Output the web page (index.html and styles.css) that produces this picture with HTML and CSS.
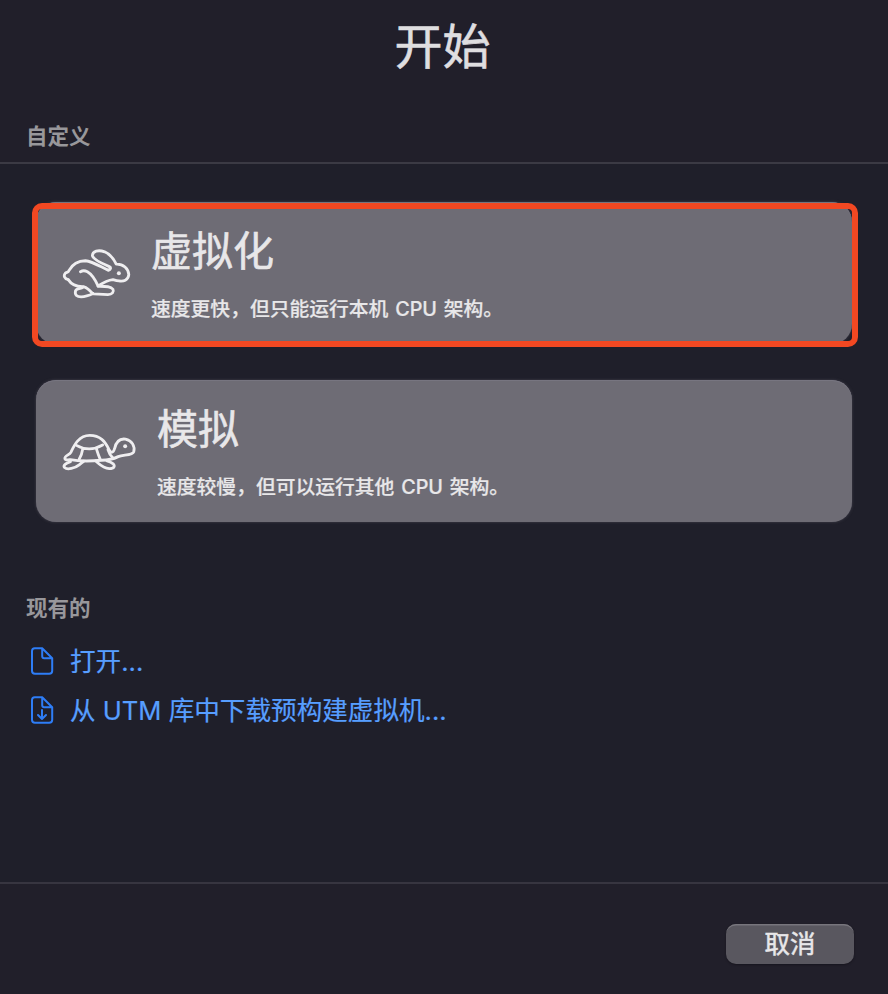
FILE: index.html
```html
<!DOCTYPE html>
<html lang="zh-CN">
<head>
<meta charset="utf-8">
<title>开始</title>
<link rel="stylesheet" href="styles.css">
</head>
<body>
<main class="wizard">
  <header class="header">
    <h1 class="title">开始</h1>
    <h2 class="section-label">自定义</h2>
  </header>
  <section class="content">
    <button class="card card-selected">
      <svg class="rabbit" viewBox="-1 0 302 240" aria-hidden="true">
        <path d="M54 134C43 132 39 122 45 115C49 111 54 113 56 107C67 87 85 77 106 77C126 79 150 94 176 106C182 103 184 98 179 95C160 87 130 75 127 62C127 48 145 43 164 50C180 57 192 72 199 87C220 86 236 101 237 119C235 137 221 140 207 138C199 137 193 135 189 134C179 135 158 144 144 153C137 137 128 119 112 110C104 106 96 107 91 110"/>
        <path d="M54 134C63 148 76 155 97 155C112 155 117 168 130 177L174 179C187 179 193 171 189 163C182 153 166 154 144 154"/>
        <path d="M100 156C91 164 80 158 76 168C73 181 81 186 93 186C108 186 119 181 129 176"/>
        <circle class="eye" cx="207" cy="115" r="6"/>
      </svg>
      <span class="card-text">
        <span class="card-title">虚拟化</span>
        <span class="card-note">速度更快，但只能运行本机 CPU 架构。</span>
      </span>
    </button>
    <button class="card">
      <svg class="turtle" viewBox="-1 0 302 210" aria-hidden="true">
        <path d="M44 131C42 122 57 121 62 112C72 91 86 61 119 61C151 61 165 79 177 103C184 116 190 114 194 101C199 77 212 70 227 72C247 76 256 94 252 110C248 121 221 119 205 125C191 132 181 136 155 136C121 139 85 139 60 134C51 135 45 136 44 131Z"/>
        <path d="M79 91Q118 113 158 90M98 101Q95 120 87 133M139 101Q145 121 151 134M174 104Q178 119 190 130"/>
        <path d="M61 140C45 145 38 152 43 158C51 166 75 160 87 150Q95 143 101 139M137 138C151 150 159 160 178 161C193 161 196 154 190 147Q181 140 171 138"/>
        <circle class="eye" cx="226" cy="94" r="6"/>
      </svg>
      <span class="card-text">
        <span class="card-title">模拟</span>
        <span class="card-note">速度较慢，但可以运行其他 CPU 架构。</span>
      </span>
    </button>
    <h2 class="section-label existing">现有的</h2>
    <nav class="links">
      <a class="link">
        <svg class="file" viewBox="0 0 24 28" aria-hidden="true"><path d="M4.8 1.2H12.2L22.2 11.2V23.8Q22.2 26.8 19.2 26.8H5Q2 26.8 2 23.8V4Q2 1.2 4.8 1.2M12.2 1.2V9.2Q12.2 11.2 14.2 11.2H22.2"/></svg>
        <span>打开...</span>
      </a>
      <a class="link">
        <svg class="file" viewBox="0 0 24 28" aria-hidden="true"><path d="M4.8 1.2H12.2L22.2 11.2V23.8Q22.2 26.8 19.2 26.8H5Q2 26.8 2 23.8V4Q2 1.2 4.8 1.2M12.2 1.2V9.2Q12.2 11.2 14.2 11.2H22.2"/><path d="M12 14V22.7M8 19L12 23L16 19"/></svg>
        <span>从 UTM 库中下载预构建虚拟机...</span>
      </a>
    </nav>
  </section>
  <footer class="footer"><button class="cancel">取消</button></footer>
</main>
</body>
</html>
```

FILE: styles.css
```css
* { box-sizing: border-box; }
body { margin: 0; background: #1f1e29; }
button { font: inherit; color: inherit; border: 0; padding: 0; }
.wizard {
  height: 994px;
  display: flex;
  flex-direction: column;
  font-family: Inter, "Noto Sans CJK SC", sans-serif;
  color: #e8e7e9;
}
.header {
  height: 164px;
  background: #211f2a;
  border-bottom: 2px solid #3b3a44;
}
.title {
  margin: 0;
  padding: 11px 3px 0 0;
  text-align: center;
  font-size: 48px;
  line-height: 72px;
  font-weight: 400;
  color: #dfdee0;
  -webkit-text-stroke: .6px;
}
.section-label {
  margin: 37px 0 0 26px;
  font-size: 21.5px;
  line-height: 32px;
  font-weight: 700;
  color: #98979b;
}
.content { flex: 1; padding-top: 38px; background: #1f1f2a; }
.card {
  width: 816px;
  height: 142px;
  margin: 0 0 36px 36px;
  padding-left: 14px;
  display: flex;
  align-items: center;
  text-align: left;
  border-radius: 20px;
  background: #6e6c75;
  box-shadow: 0 0 3px #45434e, inset 0 1px 0 #777580;
}
.card-selected { position: relative; }
.card-selected::after {
  content: "";
  position: absolute;
  inset: 1px -6px -3px -4px;
  border: 6px solid #f24822;
  border-radius: 10px;
}
svg { flex: none; fill: none; stroke-linecap: round; stroke-linejoin: round; }
.rabbit { width: 100px; height: 80px; margin-top: 4px; stroke: #efeef0; stroke-width: 8.5; }
.turtle { width: 100px; height: 70px; margin-bottom: 2px; stroke: #efeef0; stroke-width: 8.5; }
.eye { fill: #efeef0; stroke: none; }
.card-text { display: flex; flex-direction: column; margin-left: 1px; }
.turtle + .card-text { margin-left: 7px; }
.card-title { font-size: 41px; line-height: 58px; -webkit-text-stroke: .6px; }
.card-note {
  margin-top: 14px;
  font-size: 19.8px;
  line-height: 30px;
  font-weight: 500;
  white-space: nowrap;
  word-spacing: 1.5px;
  -webkit-text-stroke: .2px;
}
.section-label.existing { margin-top: 70px; }
.links { display: flex; flex-direction: column; margin: 12px 0 0 30px; }
.link {
  display: flex;
  align-items: center;
  gap: 16px;
  height: 49px;
  font-size: 25.6px;
  color: #579eff;
  -webkit-text-stroke: .2px;
}
.file { width: 24px; height: 28px; stroke: #2e7df6; stroke-width: 2; }
.link span { margin-bottom: 3px; }
.footer {
  height: 112px;
  border-top: 2px solid #373540;
  background: #211f2a;
  padding: 40px 34px 0 0;
  display: flex;
  justify-content: flex-end;
  align-items: flex-start;
}
.cancel {
  width: 128px;
  height: 40px;
  border-radius: 10px;
  background: #59575f;
  box-shadow: inset 0 2px 0 -0.5px #77757c, 0 1px 2px #17151e;
  font-size: 25.5px;
  line-height: 38px;
  -webkit-text-stroke: .5px;
}
```
